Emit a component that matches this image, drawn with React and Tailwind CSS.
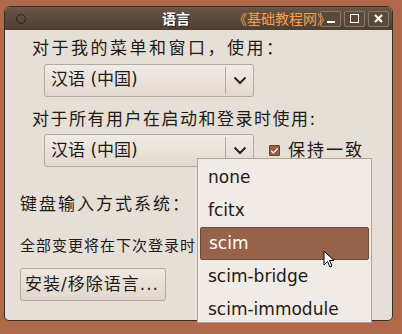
import { Check } from "lucide-react";

const font = { fontFamily: '"DejaVu Sans", "Noto Sans CJK SC", sans-serif' };

const Combo = ({ value }) => (
  <div className="flex h-[33px] w-[210px] items-stretch rounded-[3px] border border-[#b3a99f] bg-gradient-to-b from-[#f0ebe6] to-[#e2d9d0]">
    <div className="flex flex-1 items-center pl-[6px] text-[17px] text-[#1e1a16]">{value}</div>
    <div className="my-[2px] w-px bg-[#b3a99f]" />
    <div className="flex w-[27px] items-center justify-center">
      <svg width="14" height="9" viewBox="0 0 14 9">
        <path d="M1.5 1.5 L7 7 L12.5 1.5" fill="none" stroke="#2a241f" strokeWidth="2" />
      </svg>
    </div>
  </div>
);

const menuItems = ["none", "fcitx", "scim", "scim-bridge", "scim-immodule"];

export default function App() {
  return (
    <div className="relative h-[334px] w-[402px] overflow-hidden bg-[#b0694a]" style={font}>
      {/* window */}
      <div className="absolute left-[4px] top-[6px] flex h-[315px] w-[389px] flex-col overflow-hidden rounded-t-[6px] rounded-b-[5px] border border-[#3a2e26] bg-[#e6dfd8]">
        {/* title bar */}
        <div className="relative flex h-[23px] shrink-0 items-center bg-gradient-to-b from-[#6a5546] to-[#4e3e33]">
          <div className="ml-[11px] h-[10px] w-[10px] rounded-full border border-[#2e241e]" />
          <div className="absolute left-[157px] top-[2px] text-[14px] font-bold text-white [text-shadow:1px_1px_0_#222]">语言</div>
          <div className="absolute left-[228px] top-[2px] text-[14px] text-[#f0a050]">《基础教程网》</div>
          <div className="ml-auto mr-[3px] flex gap-[3px]">
            <div className="flex h-[16px] w-[21px] items-center justify-center rounded-[2px] border border-[#8a7868] bg-[#5a4839]">
              <div className="mt-[6px] h-[2px] w-[8px] bg-white" />
            </div>
            <div className="flex h-[16px] w-[21px] items-center justify-center rounded-[2px] border border-[#8a7868] bg-[#5a4839]">
              <div className="h-[9px] w-[9px] border-[1.5px] border-white" />
            </div>
            <div className="flex h-[16px] w-[21px] items-center justify-center rounded-[2px] border border-[#8a7868] bg-[#5a4839]">
              <svg width="9" height="9" viewBox="0 0 9 9">
                <path d="M1 1 L8 8 M8 1 L1 8" stroke="white" strokeWidth="2.2" />
              </svg>
            </div>
          </div>
        </div>

        {/* body */}
        <div className="flex flex-col pl-[15px] pt-[6px] text-[#1e1a16]">
          <div className="ml-[12px] text-[17px] tracking-[2.5px]">对于我的菜单和窗口，使用：</div>
          <div className="ml-[24px] mt-[2px]">
            <Combo value="汉语 (中国)" />
          </div>
          <div className="ml-[12px] mt-[10px] text-[17px] tracking-[1.5px]">对于所有用户在启动和登录时使用:</div>
          <div className="ml-[24px] mt-[2px] flex items-center gap-[15px]">
            <Combo value="汉语 (中国)" />
            <div className="flex items-center gap-[8px]">
              <div className="flex h-[11px] w-[11px] items-center justify-center rounded-[1px] border border-[#6a4030] bg-[#9a5f45]">
                <Check size={10} strokeWidth={3} color="white" />
              </div>
              <span className="text-[17px] tracking-[2px]">保持一致</span>
            </div>
          </div>
          <div className="mt-[25px] text-[17px] tracking-[2px]">键盘输入方式系统：</div>
          <div className="mt-[17px] text-[15px] tracking-[1px]">全部变更将在下次登录时</div>
          <div className="mt-[11px] flex h-[33px] w-[146px] items-center rounded-[3px] border border-[#b3a99f] bg-gradient-to-b from-[#eee8e2] to-[#e0d7ce] pl-[4px] text-[17px] tracking-[1px]">
            安装/移除语言...
          </div>
        </div>
      </div>

      {/* dropdown menu */}
      <div className="absolute left-[197px] top-[158px] flex h-[165px] w-[175px] flex-col overflow-hidden border border-[#b3a393] bg-[#f0ebe6] px-[2px] pt-[2px] text-[17px] text-[#1e1a16]">
        {menuItems.map((item) => (
          <div
            key={item}
            className={`flex h-[33px] shrink-0 items-center rounded-[2px] pl-[8px] ${
              item === "scim" ? "border border-[#6e4a36] bg-[#97624a] text-white" : ""
            }`}
          >
            {item}
          </div>
        ))}
      </div>

      {/* cursor */}
      <svg className="absolute left-[323px] top-[250px]" width="12" height="18" viewBox="0 0 12 18">
        <path d="M1 1 L1 15 L4.5 11.5 L7 17 L9 16 L6.5 10.5 L11 10.5 Z" fill="white" stroke="black" strokeWidth="1" />
      </svg>
    </div>
  );
}
